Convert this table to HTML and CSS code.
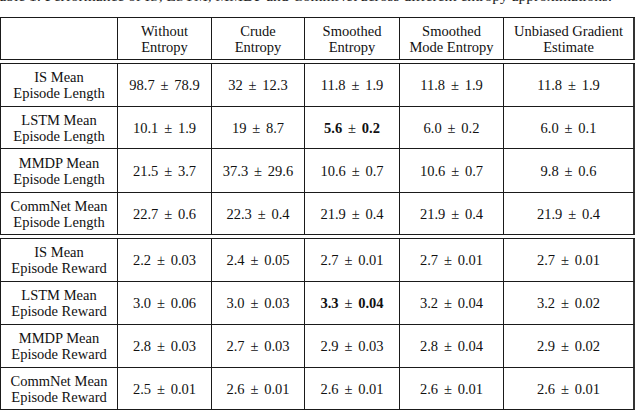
FILE: index.html
```html
<!DOCTYPE html>
<html>
<head>
<meta charset="utf-8">
<link rel="stylesheet" href="styles.css">
</head>
<body>
<div class="caption"><p>Table 1: Performance of IS, LSTM, MMDP and CommNet across different entropy approximations.</p></div>

<div class="sec sec-head">
  <div class="c"></div>
  <div class="c">Without<br>Entropy</div>
  <div class="c">Crude<br>Entropy</div>
  <div class="c">Smoothed<br>Entropy</div>
  <div class="c">Smoothed<br>Mode Entropy</div>
  <div class="c last">Unbiased Gradient<br>Estimate</div>
</div>

<div class="sec sec-len">
  <div class="c">IS Mean<br>Episode Length</div>
  <div class="c">98.7<span class="pm">±</span>78.9</div>
  <div class="c">32<span class="pm">±</span>12.3</div>
  <div class="c">11.8<span class="pm">±</span>1.9</div>
  <div class="c">11.8<span class="pm">±</span>1.9</div>
  <div class="c last">11.8<span class="pm">±</span>1.9</div>

  <div class="c">LSTM Mean<br>Episode Length</div>
  <div class="c">10.1<span class="pm">±</span>1.9</div>
  <div class="c">19<span class="pm">±</span>8.7</div>
  <div class="c"><b>5.6</b><span class="pm">±</span><b>0.2</b></div>
  <div class="c">6.0<span class="pm">±</span>0.2</div>
  <div class="c last">6.0<span class="pm">±</span>0.1</div>

  <div class="c">MMDP Mean<br>Episode Length</div>
  <div class="c">21.5<span class="pm">±</span>3.7</div>
  <div class="c">37.3<span class="pm">±</span>29.6</div>
  <div class="c">10.6<span class="pm">±</span>0.7</div>
  <div class="c">10.6<span class="pm">±</span>0.7</div>
  <div class="c last">9.8<span class="pm">±</span>0.6</div>

  <div class="c">CommNet Mean<br>Episode Length</div>
  <div class="c">22.7<span class="pm">±</span>0.6</div>
  <div class="c">22.3<span class="pm">±</span>0.4</div>
  <div class="c">21.9<span class="pm">±</span>0.4</div>
  <div class="c">21.9<span class="pm">±</span>0.4</div>
  <div class="c last">21.9<span class="pm">±</span>0.4</div>
</div>

<div class="sec sec-rew">
  <div class="c">IS Mean<br>Episode Reward</div>
  <div class="c">2.2<span class="pm">±</span>0.03</div>
  <div class="c">2.4<span class="pm">±</span>0.05</div>
  <div class="c">2.7<span class="pm">±</span>0.01</div>
  <div class="c">2.7<span class="pm">±</span>0.01</div>
  <div class="c last">2.7<span class="pm">±</span>0.01</div>

  <div class="c">LSTM Mean<br>Episode Reward</div>
  <div class="c">3.0<span class="pm">±</span>0.06</div>
  <div class="c">3.0<span class="pm">±</span>0.03</div>
  <div class="c"><b>3.3</b><span class="pm">±</span><b>0.04</b></div>
  <div class="c">3.2<span class="pm">±</span>0.04</div>
  <div class="c last">3.2<span class="pm">±</span>0.02</div>

  <div class="c">MMDP Mean<br>Episode Reward</div>
  <div class="c">2.8<span class="pm">±</span>0.03</div>
  <div class="c">2.7<span class="pm">±</span>0.03</div>
  <div class="c">2.9<span class="pm">±</span>0.03</div>
  <div class="c">2.8<span class="pm">±</span>0.04</div>
  <div class="c last">2.9<span class="pm">±</span>0.02</div>

  <div class="c">CommNet Mean<br>Episode Reward</div>
  <div class="c">2.5<span class="pm">±</span>0.01</div>
  <div class="c">2.6<span class="pm">±</span>0.01</div>
  <div class="c">2.6<span class="pm">±</span>0.01</div>
  <div class="c">2.6<span class="pm">±</span>0.01</div>
  <div class="c last">2.6<span class="pm">±</span>0.01</div>
</div>
</body>
</html>
```

FILE: styles.css
```css
html, body {
  margin: 0;
  padding: 0;
  background: #fff;
}

body {
  width: 640px;
  height: 410px;
  overflow: hidden;
  font-family: "Liberation Serif", "Times New Roman", serif;
  font-size: 14.5px;
  line-height: 16px;
  color: #111;
}

.caption {
  height: 17px;
  overflow: hidden;
}

.caption p {
  margin: -12px 0 0 -9px;
  font-size: 15.5px;
  line-height: 16px;
  white-space: nowrap;
  color: #222;
}

.sec {
  display: grid;
  grid-template-columns: 117px 94px 93px 95px 104px 131px;
  width: fit-content;
  border-left: 1px solid #1a1a1a;
  border-top: 1px solid #1a1a1a;
}

.sec-head {
  grid-template-rows: 42px;
}

.sec-len {
  margin-top: 3px;
  grid-template-rows: 43px 42px 44px 42px;
}

.sec-rew {
  margin-top: 3px;
  grid-template-rows: 43px 43px 43px 42px;
}

.c {
  box-sizing: border-box;
  border-right: 1px solid #1a1a1a;
  border-bottom: 1px solid #1a1a1a;
  display: flex;
  align-items: center;
  justify-content: center;
  text-align: center;
  white-space: nowrap;
}

.c.last {
  border-right: 2px solid #333;
}

.pm {
  margin: 0 0.4em;
}

.c b {
  font-weight: bold;
}
```
